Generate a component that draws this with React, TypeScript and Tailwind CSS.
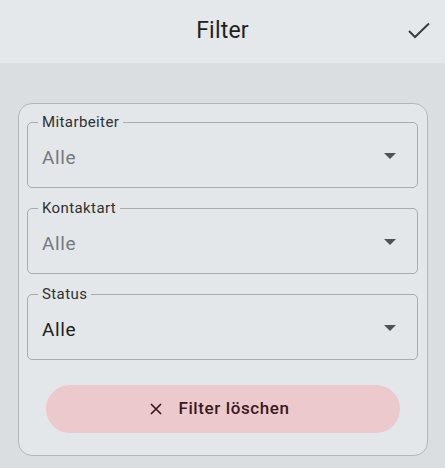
import React from 'react';

const fields = [
  { label: 'Mitarbeiter', value: 'Alle', muted: true },
  { label: 'Kontaktart', value: 'Alle', muted: true },
  { label: 'Status', value: 'Alle', muted: false },
];

function SelectField({ label, value, muted }: { label: string; value: string; muted: boolean }) {
  return (
    <div className="relative h-[66px] rounded-[5px] border border-[#a9acae] flex items-center pl-[14px] pr-[21px]">
      <span className="absolute -top-[10px] left-[10px] bg-[#e4e7ea] px-[4px] text-[15px] leading-[18px] tracking-[0.4px] text-[#2e3133]">
        {label}
      </span>
      <span className={`flex-1 text-[19px] tracking-[0.6px] pt-[6px] ${muted ? 'text-[#76797c]' : 'text-[#1c1e20]'}`}>
        {value}
      </span>
      <svg width="12" height="6" viewBox="0 0 12 6" className="mt-[2px]">
        <polygon points="0,0 12,0 6,6" fill="#505356" />
      </svg>
    </div>
  );
}

export default function App() {
  return (
    <div className="w-[445px] h-[468px] bg-[#dadee1] font-['Roboto',sans-serif] overflow-hidden">
      <div className="h-[63px] bg-[#e4e8ea] relative flex items-center justify-center">
        <h1 className="text-[23px] text-[#1f2123] tracking-[0.2px]">Filter</h1>
        <button className="absolute right-[14px] top-[20px]">
          <svg width="24" height="24" viewBox="0 0 24 24">
            <path d="M2 11 L8 17 L22 3.5" stroke="#3b3e40" strokeWidth="2" fill="none" />
          </svg>
        </button>
      </div>
      <div className="px-[18px] pt-[40px]">
        <div className="w-[410px] rounded-[14px] border border-[#b4b7ba] bg-[#e4e7ea] pt-[18px] pb-[22px] pl-[8px] pr-[9px]">
          <div className="flex flex-col gap-[20px]">
            {fields.map((f) => (
              <SelectField key={f.label} {...f} />
            ))}
          </div>
          <div className="pl-[19px] pr-[18px] mt-[25px]">
            <button className="w-full h-[48px] rounded-full bg-[#ecc9cc] flex items-center justify-center gap-[16px] pr-[6px] text-[#3a1a20]">
              <svg width="12" height="12" viewBox="0 0 12 12">
                <path d="M1 1 L11 11 M11 1 L1 11" stroke="#3a1a20" strokeWidth="1.7" />
              </svg>
              <span className="text-[17px] font-medium tracking-[0.6px]">Filter löschen</span>
            </button>
          </div>
        </div>
      </div>
    </div>
  );
}
